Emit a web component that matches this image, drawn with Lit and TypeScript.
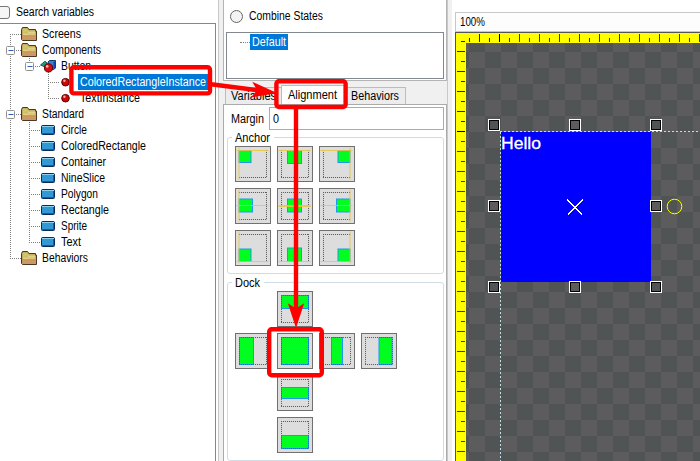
import { LitElement, html, svg, css, nothing } from "lit";
import { customElement } from "lit/decorators.js";

const label = (text: string, width: number) => html`
  <svg class="label" width=${width + 1} height="16" overflow="visible">
    <text x="0" y="12" font-size="12" textLength=${width} lengthAdjust="spacingAndGlyphs">${text}</text>
  </svg>`;

type Icon = "folder" | "component" | "ball" | "rect";
interface Row {
  text: string;
  width: number;
  depth: number;
  icon: Icon;
  box?: boolean;
  selected?: boolean;
  /* one letter per depth: v = through, l = last child, t = first child, "-" = none */
  guides: string;
  stem?: boolean;
}

const std = (text: string, width: number, last = false): Row => ({
  text, width, depth: 1, icon: "rect", guides: last ? "vl" : "vv",
});

const rows: Row[] = [
  { text: "Screens", width: 39, depth: 0, icon: "folder", guides: "t" },
  { text: "Components", width: 59, depth: 0, icon: "folder", guides: "v", box: true, stem: true },
  { text: "Button", width: 30, depth: 1, icon: "component", guides: "vl", box: true, stem: true },
  { text: "ColoredRectangleInstance", width: 126, depth: 2, icon: "ball", guides: "v-v", selected: true },
  { text: "TextInstance", width: 60, depth: 2, icon: "ball", guides: "v-l" },
  { text: "Standard", width: 42, depth: 0, icon: "folder", guides: "v", box: true, stem: true },
  std("Circle", 26),
  std("ColoredRectangle", 85),
  std("Container", 45),
  std("NineSlice", 44),
  std("Polygon", 37),
  std("Rectangle", 48),
  std("Sprite", 26),
  std("Text", 20, true),
  { text: "Behaviors", width: 46, depth: 0, icon: "folder", guides: "l" },
];

const icons = {
  folder: svg`
    <path d="M.5 3.5 L1.5 1.5 H6.5 L8 3.5 H14.5 V5 H15.5 V14.5 H1.5 L.5 13.5Z" fill="#c8965a" stroke="#4a3820"/>
    <path d="M1.5 4 L2.2 2.4 H6 L7.5 4.5 H14 V6 H6 L4 8.5 H1.5Z" fill="#c8c864"/>
    <path d="M3 8.5 L6.5 6.5 H14.5 V9 H3Z" fill="#d8c878"/>
    <path d="M2 9 H15 V14 H2Z" fill="#cc9966"/>
    <path d="M2 8.5 H5 L7 6.5 H14" fill="none" stroke="#e8d890" stroke-width=".8"/>`,
  component: svg`
    <path d="M.5 7 L5 3.2 L7 5 V9 L4.5 8.8Z" fill="#1f9980" stroke="#0b4438" stroke-width=".8"/>
    <path d="M8 4 L9.5 2.5 H15.5 V10 L13.5 11.5 H9Z" fill="#2f86d0" stroke="#123a66"/>
    <path d="M13.5 4.5 L15.5 2.5 V10 L13.5 11.5Z" fill="#1c3fae"/>
    <circle cx="8.5" cy="9.9" r="4.1" fill="#cc1010" stroke="#600"/>
    <circle cx="7.2" cy="8.4" r="1.3" fill="#ffb0b0"/>`,
  ball: svg`
    <circle cx="6.5" cy="8.2" r="3.8" fill="#cc0808" stroke="#5c0000"/>
    <circle cx="5.4" cy="6.8" r="1.2" fill="#ffa8a8"/>`,
  rect: svg`
    <rect x="1.5" y="3.5" width="13" height="9" rx="1" fill="#3399d4" stroke="#0a2a5c"/>
    <path d="M2 4.5 H14" stroke="#8cd0f4"/>
    <path d="M2 11.5 H14 M13.5 5 V12" stroke="#2350c4"/>`,
};

@customElement("project-tree")
export class ProjectTree extends LitElement {
  static styles = css`
    :host { display: flex; flex-direction: column; flex: 1; border: 1px solid #828790; border-left: 0;
      border-bottom: 0; padding-top: 2px; background: #fff; }
    .row { display: flex; height: 16px; align-items: center; }
    svg { display: block; flex: none; }
    .caption { display: flex; height: 16px; padding: 0 1px 0 2px; margin-left: 3px; fill: #000; }
    .caption.selected { background: #0078d7; fill: #fff; }
    .guide { stroke: #808080; stroke-dasharray: 1 1; }
    text { font-family: "Liberation Sans", Arial, sans-serif; }
  `;

  private gutter(r: Row) {
    const x = 10.5 + 19 * r.depth;
    return svg`
      ${[...r.guides].map((g, i) => {
        const gx = 10.5 + 19 * i;
        if (g === "-") return nothing;
        const from = g === "t" ? 8 : 0;
        const to = g === "l" ? 8 : 16;
        return svg`<line class="guide" x1=${gx} x2=${gx} y1=${from} y2=${to}/>`;
      })}
      <line class="guide" x1=${x - 0.5} x2=${x + 11} y1="8.5" y2="8.5"/>
      ${r.box ? svg`
        <rect x=${x - 4} y="4.5" width="8" height="8" rx="1" fill="#fff" stroke="#919191"/>
        <path d="M${x - 2} 8.5 h5" stroke="#2b5fb8"/>` : nothing}`;
  }

  render() {
    return rows.map((r) => html`
      <div class="row">
        <svg width=${21 + 19 * r.depth} height="16">${this.gutter(r)}</svg>
        <svg width="16" height="16">
          ${r.stem && r.depth === 1 ? svg`<path class="guide" d="M8.5 14 V16"/>` : nothing}
          ${icons[r.icon]}
        </svg>
        <div class="caption ${r.selected ? "selected" : ""}">${label(r.text, r.width)}</div>
      </div>`);
  }
}

interface Glyph { g: [number, number, number, number]; lines?: string; sides: string; thick?: boolean }

/* g = green block x, y, w, h; sides = dotted sides; lines = guides in gold. */
const anchors: Glyph[] = [
  { g: [4, 4.5, 12, 12], lines: "M1.5 4.5H33.5M4 1.5V33.5", sides: "rb" },
  { g: [10.5, 4.5, 14, 13], lines: "M1.5 4.5H33.5", sides: "lrb" },
  { g: [19, 4.5, 12, 12], lines: "M1.5 4.5H33.5M31 1.5V33.5", sides: "lb" },
  { g: [4, 11, 13.5, 13], lines: "M1.5 17.5H33.5M4 1.5V33.5", sides: "trb" },
  { g: [10.5, 11, 14, 13], lines: "M1.5 18H33.5", sides: "tlrb", thick: true },
  { g: [17.5, 11, 13.5, 13], lines: "M1.5 17.5H33.5M31 1.5V33.5", sides: "tlb" },
  { g: [4, 19, 12, 12.5], lines: "M1.5 31.5H33.5M4 1.5V33.5", sides: "tr" },
  { g: [10.5, 18, 14, 13.5], lines: "M1.5 31.5H33.5", sides: "tlr" },
  { g: [19, 19, 12, 12.5], lines: "M1.5 31.5H33.5M31 1.5V33.5", sides: "tl" },
];

const dock: (Glyph | null)[] = [
  null, { g: [4.5, 4.5, 27, 13], sides: "tlrb" }, null, null,
  { g: [4.5, 4.5, 14, 27], sides: "tlrb" },
  { g: [4.5, 4.5, 27, 27], sides: "tlrb" },
  { g: [12.5, 4.5, 11, 27], sides: "tlrb" },
  { g: [18, 4.5, 13, 27], sides: "tlrb" },
  null, { g: [4.5, 12.5, 27, 11], sides: "tlrb" }, null, null,
  null, { g: [4.5, 18.5, 27, 13], sides: "tlrb" }, null, null,
];

const sidePath: Record<string, string> = {
  t: "M4 4.5H32", b: "M4 31.5H32", l: "M4.5 4V32", r: "M31.5 4V32",
};

@customElement("alignment-button")
export class AlignmentButton extends LitElement {
  static properties = { glyph: { attribute: false } };
  declare glyph: Glyph;
  static styles = css`
    :host { display: block; width: 36px; height: 36px; }
    svg { display: block; }
    .face { fill: #dddddd; stroke: #707070; }
    .dots { fill: none; stroke: #606060; stroke-dasharray: 1.1 .9; }
    .block { fill: #00ff21; stroke: #1e98f0; }
    .gold { fill: none; stroke: #e8c840; stroke-opacity: .85; }
  `;
  render() {
    const { g, lines, sides, thick } = this.glyph;
    const dots = svg`<path class="dots" d=${[...sides].map((s) => sidePath[s]).join("")}/>`;
    return html`<svg width="36" height="36">
      <rect class="face" x=".5" y=".5" width="35" height="35"/>
      <rect class="block" x=${g[0]} y=${g[1]} width=${g[2]} height=${g[3]}/>
      ${dots}
      ${lines ? svg`<path class="gold" d=${lines} stroke-width=${thick ? 2 : 1}/>` : nothing}
    </svg>`;
  }
}

@customElement("properties-panel")
export class PropertiesPanel extends LitElement {
  static styles = css`
    :host { display: flex; flex-direction: column; width: 224px; box-sizing: border-box; background: #f0f0f0; }
    .label { display: block; flex: none; fill: #000; }
    text { font-family: "Liberation Sans", Arial, sans-serif; }
    .states { height: 82px; box-sizing: border-box; border: 1px solid #b4b4b4; border-top: 0; background: #fff;
      display: flex; flex-direction: column; padding: 8px 2px 1px; }
    .combine { display: flex; align-items: center; gap: 6px; padding-left: 4px; height: 16px; }
    .radio { width: 11px; height: 11px; border: 1px solid #666; border-radius: 50%; background: #f3f3f3; }
    .list { margin-top: 8px; flex: 1; border: 1px solid #828790; display: flex; align-items: flex-start;
      padding: 1px 0 0 13px; }
    .twig { width: 10px; height: 8px; border-bottom: 1px dotted #808080; }
    .picked { background: #0078d7; padding: 0 2px; height: 16px; width: 34px; }
    .picked .label { fill: #fff; }
    .tabs { display: flex; align-items: flex-end; height: 23px; padding-left: 2px; }
    .tab { box-sizing: border-box; height: 17px; border: 1px solid #bcbcbc; border-bottom: 0; background: #ececec;
      padding-left: 5px; width: 57px; }
    .tab.active { height: 19px; background: #fff; width: 65px; padding: 1px 0 0 6px; margin-left: -1px; }
    .tab.tail { width: 60px; padding-left: 4px; }
    .page { flex: 1; background: #fff; border: 1px solid #ababab; border-bottom: 0; padding: 2px 2px 0 3px; }
    .margin { display: flex; align-items: center; height: 23px; padding-left: 4px; gap: 4px; }
    .input { flex: 1; height: 21px; border: 1px solid #ababab; padding-left: 3px; display: flex; align-items: center; }
    .group { box-sizing: border-box; border: 1px solid #d0dce4; border-radius: 3px; height: 137px; margin-top: 7px;
      width: 217px; padding-left: 7px; }
    .legend { width: max-content; background: #fff; height: 16px; margin: -8px 0 0 -3px; padding: 0 3px; }
    .grid { display: grid; grid-template-columns: repeat(4, 36px); gap: 6px; }
    .grid.three { grid-template-columns: repeat(3, 36px); }
    .group.dock { height: 179px; margin-top: 8px; }
  `;
  render() {
    return html`
      <div class="states">
        <div class="combine"><span class="radio"></span>${label("Combine States", 74)}</div>
        <div class="list"><span class="twig"></span><span class="picked">${label("Default", 34)}</span></div>
      </div>
      <div class="tabs">
        <div class="tab">${label("Variables", 45)}</div>
        <div class="tab active">${label("Alignment", 49)}</div>
        <div class="tab tail">${label("Behaviors", 48)}</div>
      </div>
      <div class="page">
        <div class="margin">${label("Margin", 33)}<div class="input">${label("0", 6)}</div></div>
        <div class="group">
          <div class="legend">${label("Anchor", 35)}</div>
          <div class="grid three">${anchors.map((g) => html`<alignment-button .glyph=${g}></alignment-button>`)}</div>
        </div>
        <div class="group dock">
          <div class="legend">${label("Dock", 25)}</div>
          <div class="grid">${dock.map((g) => g
            ? html`<alignment-button .glyph=${g}></alignment-button>` : html`<span></span>`)}</div>
        </div>
      </div>`;
  }
}

@customElement("editor-canvas")
export class EditorCanvas extends LitElement {
  static styles = css`
    :host { display: flex; flex-direction: column; flex: 1; min-width: 0; background: #fff; }
    text { font-family: "Liberation Sans", Arial, sans-serif; }
    .toolbar { margin: 12px 0 0 3px; height: 20px; box-sizing: border-box; border: 1px solid #c8c8c8;
      border-right: 0; background: #fdfdfd; padding: 1px 0 0 4px; }
    .toolbar .label { display: block; }
    .stage { margin-left: 3px; flex: 1; display: block; min-height: 0; }
  `;
  render() {
    const ticks = (origin: number, from: number, to: number, horizontal: boolean) => {
      const out = [];
      for (let p = from; p < to; p += 10) {
        const start = (p - origin) % 20 === 0 ? 2 : 6;
        const color = p === origin ? "#000" : p < origin ? "#8b0000" : "#006400";
        out.push(horizontal
          ? svg`<rect x=${p} y=${start} width="1" height=${10 - start} fill=${color}/>`
          : svg`<rect x=${start} y=${p} width=${10 - start} height="1" fill=${color}/>`);
      }
      return out;
    };
    const handles = [33, 114, 195].flatMap((x, i) => [87, 168, 249].map((y, j) =>
      i === 1 && j === 1 ? nothing : svg`
        <rect x=${x + 0.5} y=${y + 0.5} width="11" height="11" fill="none" stroke="#fff"/>
        <rect x=${x + 1.5} y=${y + 1.5} width="9" height="9" fill=${(i + j) % 2 ? "#5c5c5c" : "#505454"} stroke="#000"/>`));
    return html`
      <div class="toolbar">${label("100%", 25)}</div>
      <svg class="stage" width="245" height="429" shape-rendering="crispEdges">
        <defs>
          <pattern id="checks" x="14" y="20" width="32" height="32" patternUnits="userSpaceOnUse">
            <rect width="32" height="32" fill="#505454"/>
            <path d="M0 0h16v16h-16zM16 16h16v16h-16z" fill="#5c5c5c"/>
          </pattern>
        </defs>
        <rect width="245" height="429" fill="#555"/>
        <rect x="1" y="1" width="244" height="428" fill="#ff0"/>
        <rect x="11" y="11" width="234" height="418" fill="url(#checks)"/>
        ${ticks(44, 14, 245, true)}
        ${ticks(99, 9, 429, false)}
        <rect x="46" y="100" width="150" height="150" fill="#00f"/>
        <path d="M45 99.5H245M45.5 100V429" stroke="#bfe0e6" stroke-dasharray="2 2" fill="none"/>
        <text x="46" y="116.5" font-size="17.3" textLength="40" lengthAdjust="spacingAndGlyphs"
          fill="#fff" stroke="#fff" stroke-width=".3">Hello</text>
        <path d="M112 167.5L127 182.5" stroke="#fff"/>
        <path d="M113 182.5L128 167.5" stroke="#fff" stroke-width="1.4"/>
        <circle cx="219.5" cy="174.5" r="7.3" fill="none" stroke="#ff0" shape-rendering="auto"/>
        ${handles}
      </svg>`;
  }
}

@customElement("app-root")
export class AppRoot extends LitElement {
  static styles = css`
    :host { display: flex; position: relative; width: 700px; height: 461px; overflow: hidden; background: #f0f0f0; }
    .side { display: flex; flex-direction: column; width: 217px; background: #fff; padding-right: 1px; }
    .side project-tree { width: 215px; }
    .search { display: flex; height: 23px; align-items: center; gap: 6px; fill: #000; padding-top: 1px;
      box-sizing: border-box; }
    .check { width: 12px; height: 11px; margin-left: -4px; border: 1px solid #777; border-radius: 3px;
      background: #f6f6f6; }
    text { font-family: "Liberation Sans", Arial, sans-serif; }
    .splitter { width: 4px; border-left: 1px solid #c8c8c8; background: #f0f0f0; }
    .callouts { position: absolute; inset: 0; fill: none; stroke: #f00; stroke-width: 4.4; }
    .callouts .head { fill: #f00; stroke: none; }
  `;
  render() {
    return html`
      <div class="side">
        <div class="search"><span class="check"></span>${label("Search variables", 78)}</div>
        <project-tree></project-tree>
      </div>
      <div class="splitter"></div>
      <properties-panel></properties-panel>
      <div class="splitter"></div>
      <editor-canvas></editor-canvas>
      <svg class="callouts" width="700" height="461">
        <rect x="71.4" y="67.2" width="138.6" height="26.2" rx="2.5"/>
        <rect x="276.4" y="81.2" width="69.2" height="25.8" rx="2.5"/>
        <rect x="269.2" y="329.2" width="52.6" height="46" rx="2.5"/>
        <path d="M211 84.3L262 90.8M296 108V312"/>
        <path class="head" d="M277 93L252.3 81.7L257 90.2L250.8 97.5Z"/>
        <path class="head" d="M296 328L287.8 303.2L296 308.5L304.2 303.2Z"/>
      </svg>`;
  }
}
